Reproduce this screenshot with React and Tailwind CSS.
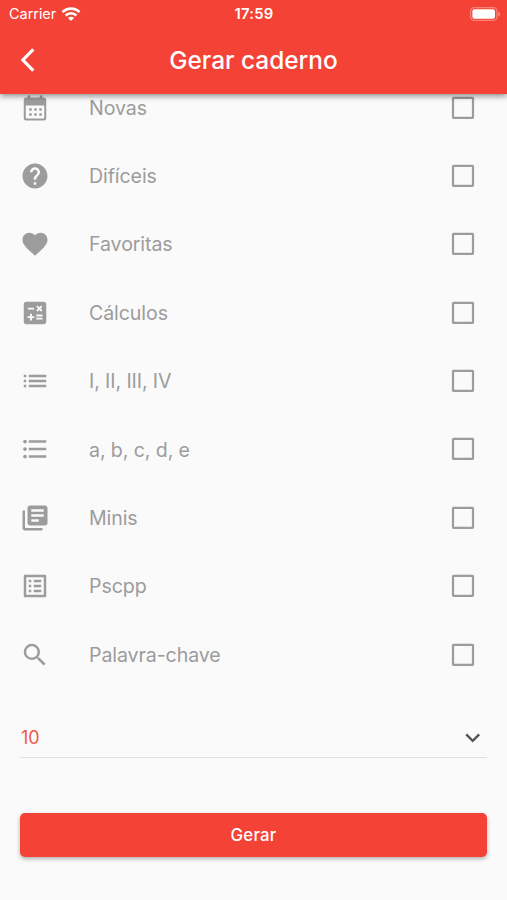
import React, { useState } from 'react'
import {
  MdCalculate,
  MdFavorite,
  MdFormatListBulleted,
  MdHelp,
  MdKeyboardArrowDown,
  MdLibraryBooks,
  MdList,
  MdListAlt,
  MdSearch,
} from 'react-icons/md'

const FILTERS = [
  { id: 'novas', label: 'Novas', icon: CalendarIcon },
  { id: 'dificeis', label: 'Difíceis', icon: MdHelp },
  { id: 'favoritas', label: 'Favoritas', icon: MdFavorite },
  { id: 'calculos', label: 'Cálculos', icon: MdCalculate },
  { id: 'romanos', label: 'I, II, III, IV', icon: MdList },
  { id: 'letras', label: 'a, b, c, d, e', icon: MdFormatListBulleted },
  { id: 'minis', label: 'Minis', icon: MdLibraryBooks },
  { id: 'pscpp', label: 'Pscpp', icon: MdListAlt },
  { id: 'palavra', label: 'Palavra-chave', icon: MdSearch },
]

// Calendar with a solid top and two rows of days
function CalendarIcon({ size, className }) {
  return (
    <svg width={size} height={size} viewBox="0 0 24 24" fill="currentColor" className={className}>
      <path
        fillRule="evenodd"
        d="M6.2 2h2v1.500h7.600V2h2v1.500H19a2 2 0 0 1 2 2V20a2 2 0 0 1-2 2H5a2 2 0 0 1-2-2V5.500a2 2 0 0 1 2-2h1.200zM4.600 10v9.400a1 1 0 0 0 1 1h12.800a1 1 0 0 0 1-1V10z"
      />
      <path d="M7.4 12.2h2v2h-2zM11.4 12.2h2v2h-2zM15.4 12.2h2v2h-2zM7.4 16.2h2v2h-2zM11.4 16.2h2v2h-2zM15.4 16.2h2v2h-2z" />
    </svg>
  )
}

function BackIcon() {
  return (
    <svg width="15" height="24" viewBox="0 0 15 24" fill="none" stroke="white" strokeWidth="3.2">
      <path d="M13.3 1.4L2.9 12l10.4 10.6" />
    </svg>
  )
}

function WifiIcon() {
  return (
    <svg width="20" height="14" viewBox="0 0 20 14" fill="none" stroke="white" strokeWidth="2.6">
      <path d="M1.5 5.2a12 12 0 0 1 17 0" />
      <path d="M4.6 8.5a7.7 7.7 0 0 1 10.8 0" />
      <path d="M10 14l-3-3.1a4.2 4.2 0 0 1 6 0z" fill="white" stroke="none" />
    </svg>
  )
}

function BatteryIcon() {
  return (
    <svg width="31" height="14" viewBox="0 0 31 14">
      <rect x="0.6" y="0.6" width="26.4" height="12.8" rx="3.6" fill="none" stroke="white" strokeOpacity="0.35" strokeWidth="1.2" />
      <rect x="2.4" y="2.2" width="22.6" height="9.6" rx="2" fill="white" />
      <path d="M28.4 4.7v4.6c1-.4 1.7-1.3 1.7-2.3s-.7-1.9-1.7-2.3z" fill="white" fillOpacity="0.4" />
    </svg>
  )
}

function StatusBar() {
  return (
    <div className="grid h-[27px] grid-cols-3 items-center pl-[9px] pr-[6px]">
      <div className="flex items-center gap-[5px]">
        <span className="pt-px text-[14.5px] leading-none tracking-[-0.05px]">Carrier</span>
        <WifiIcon />
      </div>
      <span className="pr-[2px] pt-px text-center text-[14.8px] font-semibold leading-none tracking-[0.2px]">17:59</span>
      <div className="flex justify-end">
        <BatteryIcon />
      </div>
    </div>
  )
}

function Header() {
  return (
    <header className="relative z-10 h-[94px] bg-[#f44336] text-white shadow-[0_2px_6px_rgba(0,0,0,0.45)]">
      <StatusBar />
      <div className="grid h-[66px] grid-cols-[60px_1fr_60px] items-center">
        <button className="pl-5" aria-label="Voltar">
          <BackIcon />
        </button>
        <h1 className="text-center text-[24.4px] font-medium leading-none">Gerar caderno</h1>
      </div>
    </header>
  )
}

function FilterRow({ filter, checked, onToggle }) {
  const Icon = filter.icon
  return (
    <li className="flex h-[68.4px] items-center pl-5 pr-8 text-[#9c9c9c]" onClick={onToggle}>
      <Icon size={30} className="shrink-0" />
      <span className="ml-[39px] flex-1 pt-[2px] text-[19.6px] leading-none tracking-[-0.1px]">
        {filter.label}
      </span>
      <svg width="24" height="24" viewBox="0 0 24 24" fill="none" stroke="#9c9c9c" strokeWidth="2.2">
        <rect x="2" y="1.8" width="20" height="20" rx="0.5" />
        {checked && <path d="M6 12l4.5 4.5L19 7.5" />}
      </svg>
    </li>
  )
}

export default function App() {
  const [selected, setSelected] = useState([])

  const toggle = (id) =>
    setSelected((prev) => (prev.includes(id) ? prev.filter((s) => s !== id) : [...prev, id]))

  return (
    <div className="h-screen overflow-hidden bg-[#fafafa] font-['Inter',sans-serif]">
      <Header />

      {/* List is scrolled a little, so the first row starts under the header */}
      <ul className="-mt-[20.7px]">
        {FILTERS.map((filter) => (
          <FilterRow
            key={filter.id}
            filter={filter}
            checked={selected.includes(filter.id)}
            onToggle={() => toggle(filter.id)}
          />
        ))}
      </ul>

      <div className="px-5">
        {/* Question count */}
        <div className="mt-[30px] flex h-[39px] items-center justify-between border-b border-[#e0e0e0] text-[#f0594d]">
          <span className="pl-px text-[18px] leading-none">10</span>
          <MdKeyboardArrowDown size={29.4} className="text-[#555]" />
        </div>

        <button className="mt-[55.5px] h-[44px] w-full rounded-[5px] bg-[#f44336] pt-px text-[16.8px] font-medium tracking-[0.2px] text-white shadow-[0_2px_4px_rgba(0,0,0,0.3)]">
          Gerar
        </button>
      </div>
    </div>
  )
}
